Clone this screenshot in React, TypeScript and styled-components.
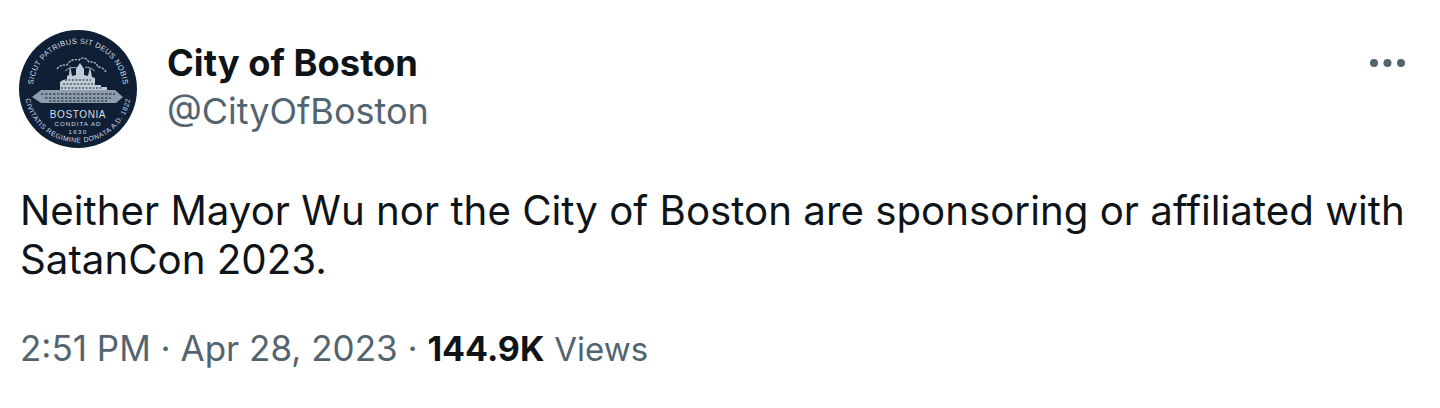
import React from "react";
import styled, { createGlobalStyle } from "styled-components";

const Global = createGlobalStyle`
  html, body { margin: 0; padding: 0; background: #fff; }
  body { font-family: Inter, "Liberation Sans", Arial, sans-serif; }
`;

const Tweet = styled.main`
  width: 1440px;
  height: 408px;
  box-sizing: border-box;
  padding: 30px 33px 0 19px;
  background: #fff;
  overflow: hidden;
  display: flex;
  flex-direction: column;
`;

const Header = styled.header`
  display: flex;
  align-items: flex-start;
`;

const Avatar = styled.svg`
  width: 118px;
  height: 118px;
  flex: none;
`;

const Identity = styled.div`
  flex: 1;
  margin-left: 30px;
  padding-top: 10px;
  display: flex;
  flex-direction: column;
`;

const Name = styled.div`
  font-size: 36.3px;
  line-height: 46px;
  font-weight: 700;
  color: #0f1419;
`;

const Handle = styled.div`
  font-size: 36px;
  line-height: 51px;
  color: #536471;
`;

const More = styled.svg`
  width: 40px;
  height: 12px;
  margin-top: 27px;
  flex: none;
`;

const Body = styled.p`
  margin: 38px 0 0 1px;
  font-size: 40.25px;
  line-height: 49px;
  color: #0f1419;
  white-space: pre-line;
`;

const Meta = styled.footer`
  margin: 41px 0 0 1px;
  font-size: 35px;
  line-height: 46px;
  color: #536471;
  white-space: nowrap;
`;

const Count = styled.span`
  color: #0f1419;
  font-weight: 700;
  font-size: 34px;
`;

const Views = styled.span`
  font-size: 33px;
`;

const Seal = () => (
  <Avatar viewBox="0 0 118 118" aria-label="Seal of the City of Boston">
    <defs>
      <path id="top" d="M14.3 53.5 A45 45 0 0 1 103.7 53.5" />
      <path id="bot" d="M5.7 54.3 A53.5 53.5 0 1 0 112.3 54.3" />
    </defs>
    <circle cx="59" cy="59" r="59" fill="#0f2036" />
    <g fill="#d6dde6" fontFamily="'Liberation Sans', Arial, sans-serif">
      <text fontSize="7.6" letterSpacing="0.3">
        <textPath href="#top" startOffset="50%" textAnchor="middle">SICUT PATRIBUS SIT DEUS NOBIS</textPath>
      </text>
      <text fontSize="6.8" letterSpacing="0.55">
        <textPath href="#bot" startOffset="50%" textAnchor="middle">CIVITATIS REGIMINE DONATA A.D. 1822</textPath>
      </text>
      <text x="59" y="87.5" fontSize="10" textAnchor="middle" letterSpacing="0.6">BOSTONIA</text>
      <text x="59" y="96.3" fontSize="6.2" textAnchor="middle" letterSpacing="1">CONDITA AD</text>
      <text x="59" y="104" fontSize="6" textAnchor="middle" letterSpacing="1.4">1630</text>
    </g>
    <path d="M13 67 l9 -7 h74 l8 7 l-7 6 H22 Z" fill="#8f9caa" />
    <path d="M41 60 v-8 l3-2 4 -1 v-3 l2-1 1-10 2 11 4-1 v-6 l4-6 4 6 v6 l4 1 2-9 2 10 3 1 v7 h6 v2 h6 v3 Z" fill="#c3ccd6" />
    <path d="M22 64 h74 M26 68 h66 M30 71 h58" stroke="#0f2036" strokeWidth="1.1" strokeDasharray="2.5 1.5" />
    <path d="M44 54 h32 M46 50 h26 M42 58 h42" stroke="#0f2036" strokeWidth="1" strokeDasharray="2 1.5" />
    <path d="M38 39 q4 -5 10 -4 q4 -7 12 -5 q5 -5 10 2 q7 -1 9 5 q5 0 8 5" fill="none" stroke="#a9b5c2" strokeWidth="1.3" strokeDasharray="2.5 1" />
    <path d="M46 41 q6 -5 12 -3 M66 37 q6 0 10 4" fill="none" stroke="#a9b5c2" strokeWidth="0.9" />
  </Avatar>
);

export default function App() {
  return (
    <>
      <Global />
      <Tweet>
        <Header>
          <Seal />
          <Identity>
            <Name>City of Boston</Name>
            <Handle>@CityOfBoston</Handle>
          </Identity>
          <More viewBox="0 0 40 12" aria-label="More">
            <circle cx="7" cy="6" r="4" fill="#536471" />
            <circle cx="20.5" cy="6" r="4" fill="#536471" />
            <circle cx="34" cy="6" r="4" fill="#536471" />
          </More>
        </Header>
        <Body>{"Neither Mayor Wu nor the City of Boston are sponsoring or affiliated with\nSatanCon 2023."}</Body>
        <Meta>
          2:51 PM · Apr 28, 2023 · <Count>144.9K</Count> <Views>Views</Views>
        </Meta>
      </Tweet>
    </>
  );
}
